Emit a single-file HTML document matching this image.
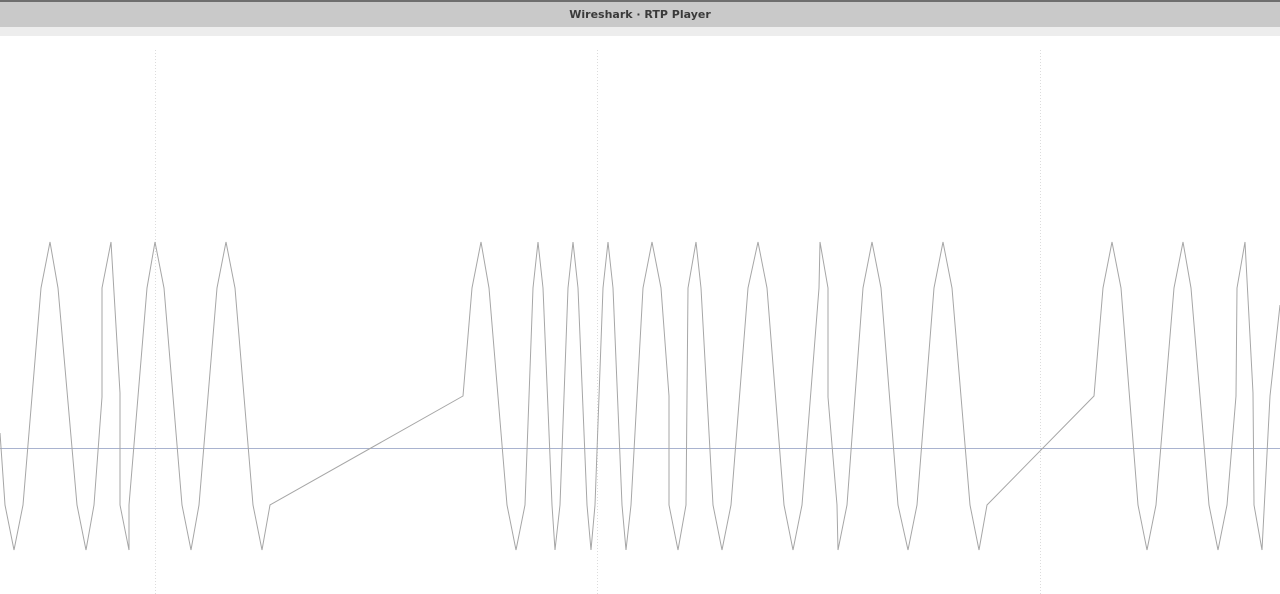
<!DOCTYPE html>
<html><head><meta charset="utf-8"><style>
html,body{margin:0;padding:0;width:1280px;height:594px;overflow:hidden;background:#fff}
.title{position:absolute;left:0;top:0;width:1280px;height:27px;background:#c9c9c9;border-top:2px solid #6e6e6e;box-sizing:border-box;text-align:center;font:bold 11px/25px "DejaVu Sans","Liberation Sans",sans-serif;color:#3a3a3a}
.strip{position:absolute;left:0;top:27px;width:1280px;height:9px;background:#ededed}
svg{position:absolute;left:0;top:0}
</style></head><body>
<div class="title">Wireshark · RTP Player</div>
<div class="strip"></div>
<svg width="1280" height="594">
<g stroke="#dcdcdc" stroke-width="1" stroke-dasharray="1,2">
<line x1="155.5" y1="50" x2="155.5" y2="594"/>
<line x1="597.5" y1="50" x2="597.5" y2="594"/>
<line x1="1040.5" y1="50" x2="1040.5" y2="594"/>
</g>
<line x1="0" y1="448.5" x2="1280" y2="448.5" stroke="#a9b3cf" stroke-width="1"/>
<polyline fill="none" stroke="#a6a6a6" stroke-width="1" points="0,433 5,505 14,550 23,505 41,288 50,242 58,288 77,505 86,550 94,505 102,397 102,288 111,242 120,393 120,505 129,550 129,505 147,288 155,242 164,288 182,505 191,550 199,505 217,288 226,242 235,288 253,505 262,550 270,505 463,396 472,288 481,242 489,288 507,505 516,550 525,505 533,288 538,242 543,288 552,505 555,550 560,505 568,288 573,242 578,288 587,505 591,550 595,505 603,288 608,242 613,288 622,505 626,550 631,505 643,288 652,242 661,288 669,396 669,505 678,550 686,505 688,288 696,242 701,288 713,505 722,550 731,505 748,288 758,242 767,288 784,505 793,550 802,505 819,288 820,242 828,288 828,397 837,505 838,550 847,505 863,288 872,242 881,288 898,505 908,550 917,505 934,288 943,242 952,288 970,505 979,550 987,505 1094,396 1103,288 1112,242 1121,288 1138,505 1147,550 1156,505 1174,288 1183,242 1191,288 1209,505 1218,550 1227,505 1236,396 1237,288 1245,242 1253,393 1254,505 1262,550 1270,396 1280,305"/>
</svg>
</body></html>
